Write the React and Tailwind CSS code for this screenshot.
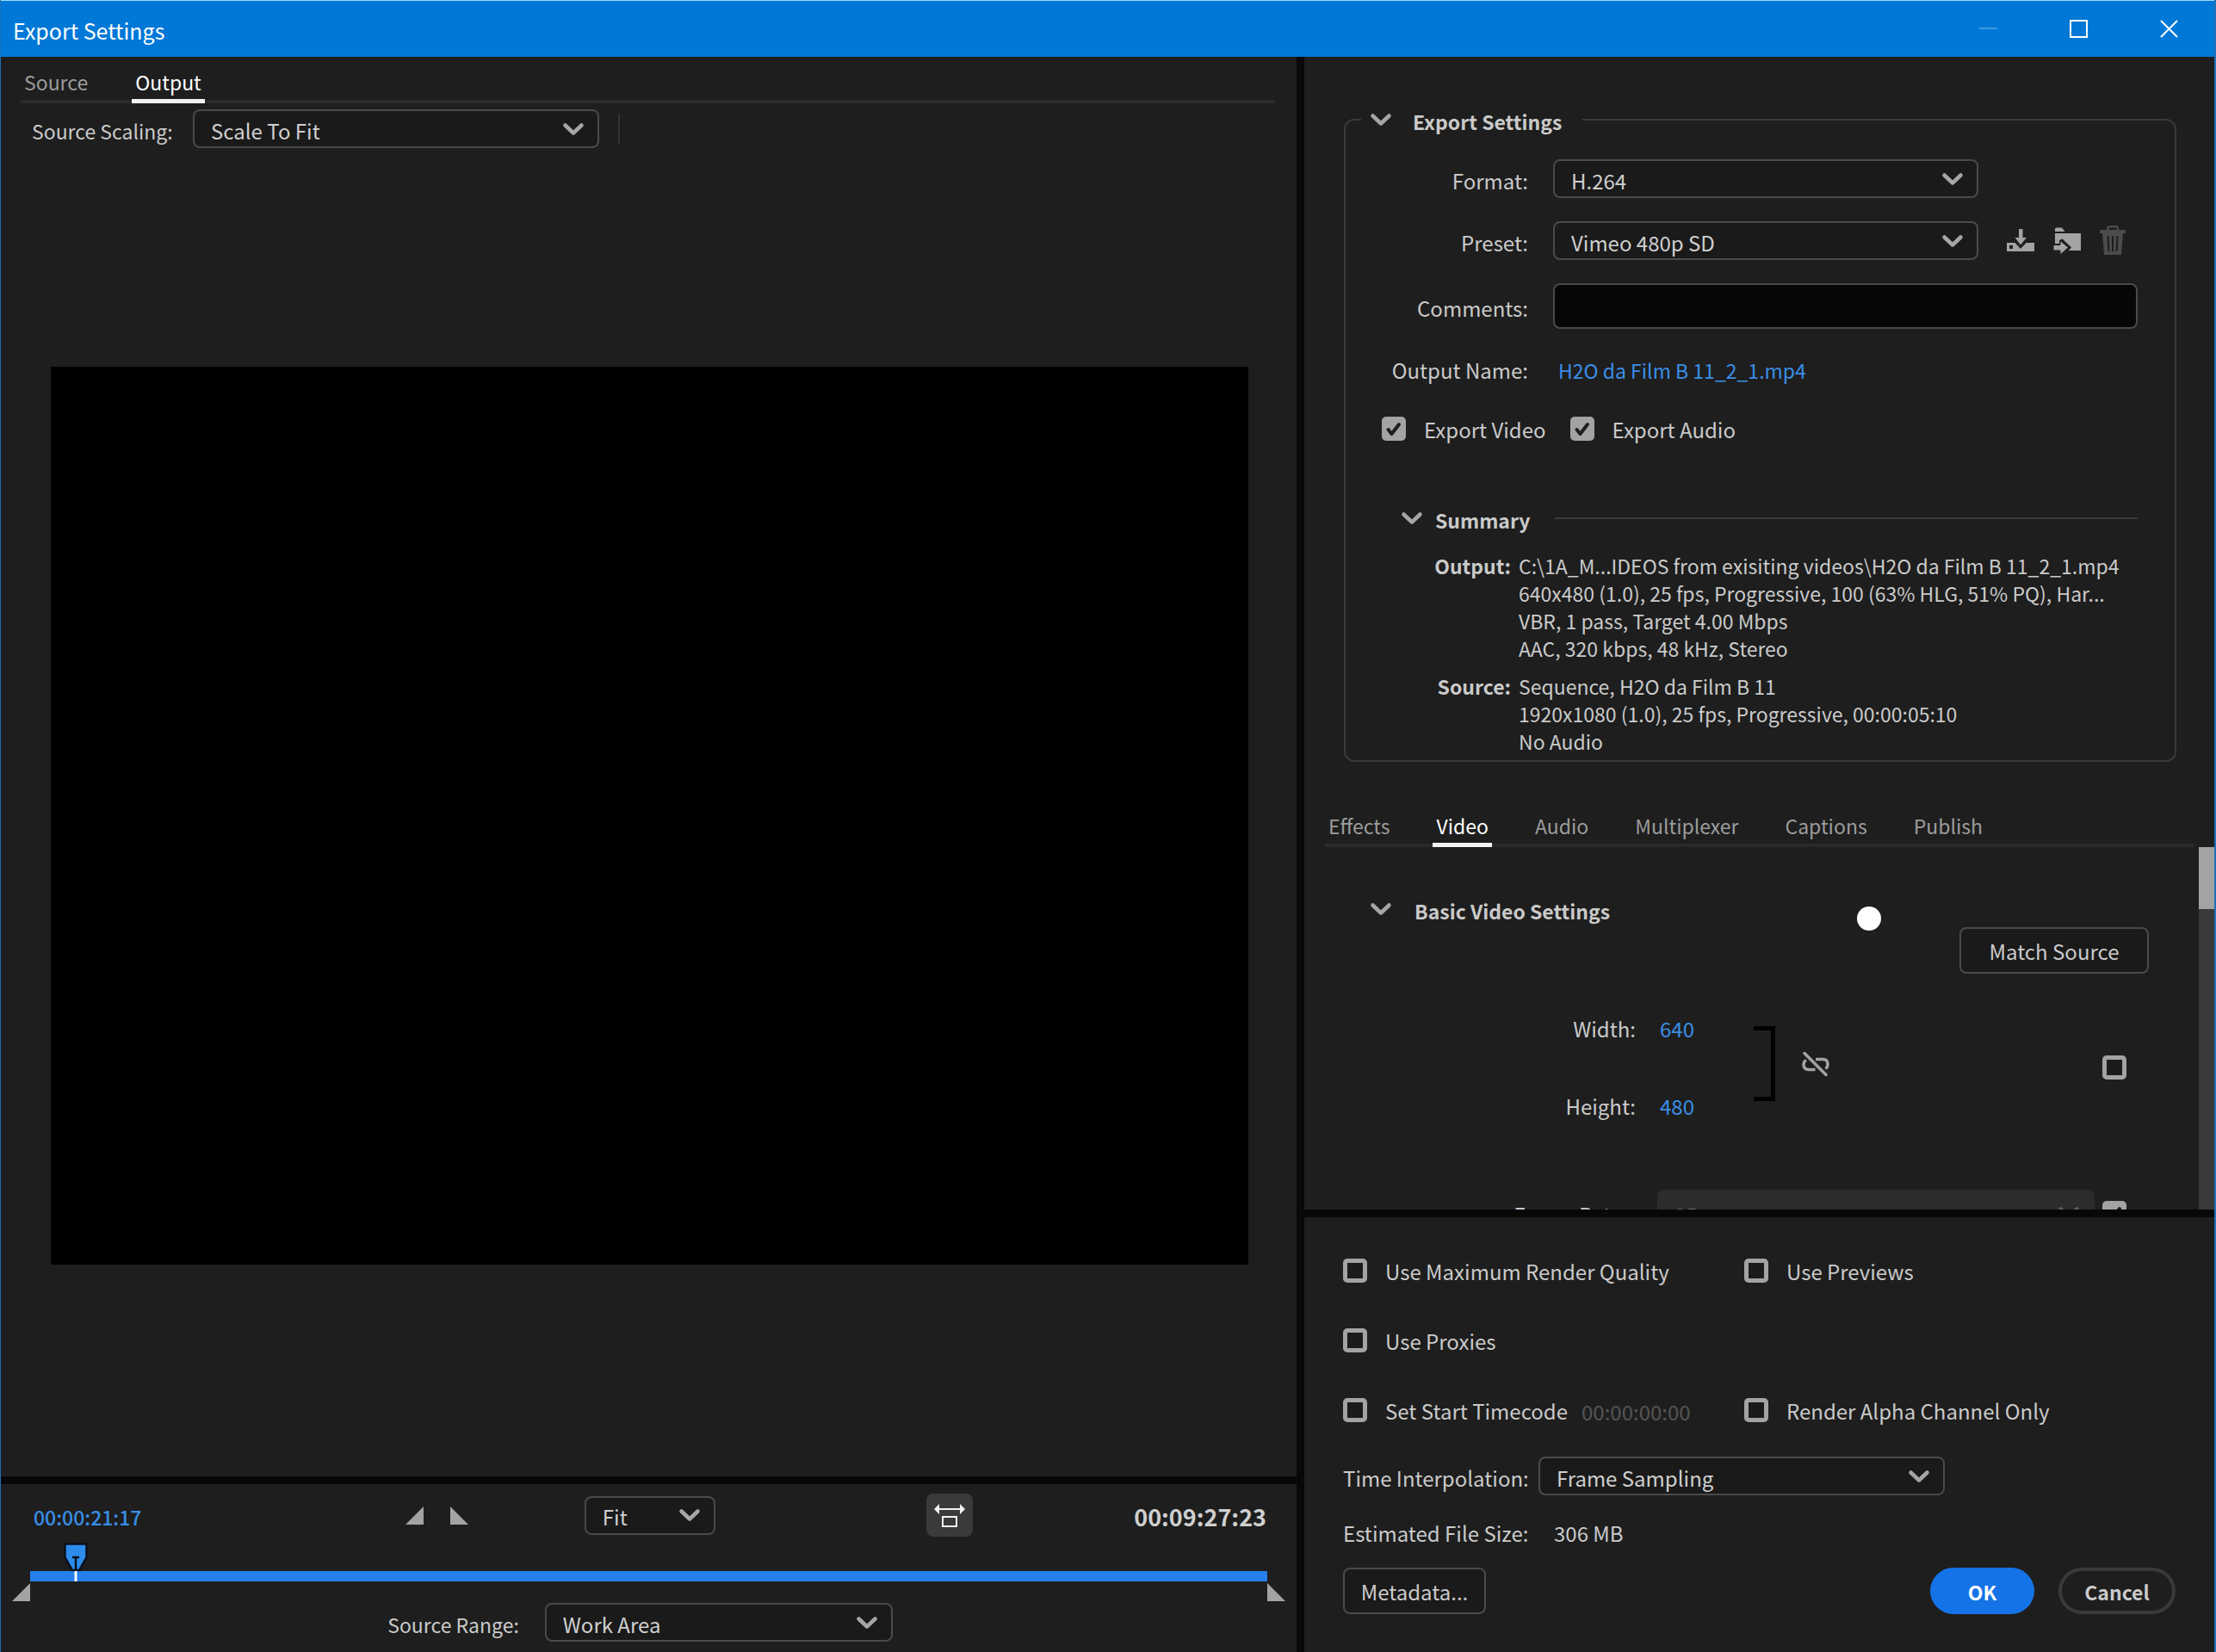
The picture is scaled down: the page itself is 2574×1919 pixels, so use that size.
import React from "react";

function Chevron({ className = "" }) {
  return (
    <svg viewBox="0 0 26 16" className={"h-4 w-[26px] shrink-0 text-[#a6a6a6] " + className} fill="none" stroke="currentColor" strokeWidth="4.500" strokeLinecap="round" strokeLinejoin="round" aria-hidden="true">
      <path d="M3.500 3.500l9.500 9 9.500-9" />
    </svg>
  );
}

function Select({ id, value, className = "" }) {
  return (
    <div className={"grid items-center " + className}>
      <select id={id} aria-label={id} className="col-start-1 row-start-1 h-[45px] w-full appearance-none rounded-lg border-2 border-[#4a4a4a] bg-[#1a1a1a] pl-[19px] pr-12 pt-1 text-[#cfcfcf]">
        <option>{value}</option>
      </select>
      <Chevron className="pointer-events-none col-start-1 row-start-1 mr-[17px] justify-self-end" />
    </div>
  );
}

function Checkbox({ id, label, checked = false }) {
  return (
    <span className="grid size-7 shrink-0 place-items-center">
      <input id={id} type="checkbox" aria-label={label} defaultChecked={checked} className="peer col-start-1 row-start-1 size-7 appearance-none rounded-[5px] border-[5px] border-[#a3a3a3] bg-[#1b1b1b] checked:bg-[#a3a3a3]" />
      <svg viewBox="0 0 28 28" className="pointer-events-none invisible col-start-1 row-start-1 size-7 peer-checked:visible" fill="none" stroke="#1e1e1e" strokeWidth="4" strokeLinecap="round" strokeLinejoin="round" aria-hidden="true">
        <path d="M7.500 15l4 5L20 9" />
      </svg>
    </span>
  );
}

function LabeledCheckbox({ id, label, checked }) {
  return (
    <div className="flex h-7 items-center gap-[21px]">
      <Checkbox id={id} checked={checked} label={label} />
      <label htmlFor={id} className="whitespace-nowrap pt-[2px] leading-7">{label}</label>
    </div>
  );
}

function Tabs({ items, active, className }) {
  return (
    <nav role="tablist" className={"flex h-[54px] border-b-4 border-[#2a2a2a] text-[23px] " + className}>
      {items.map((t) => (
        <button
          key={t}
          role="tab"
          aria-selected={t === active}
          className={
            t === active
              ? "-mb-1 flex items-center border-b-[5px] border-[#f2f2f2] px-1 pt-2 text-white"
              : "-mb-1 flex items-center border-b-[5px] border-transparent px-1 pt-2 text-[#9c9c9c]"
          }
        >
          {t}
        </button>
      ))}
    </nav>
  );
}

function LeftTriangle() {
  return (
    <svg viewBox="0 0 21 21" className="size-[21px]" fill="#a3a3a3" aria-hidden="true">
      <path d="M21 0v21H0z" />
    </svg>
  );
}

function RightTriangle() {
  return (
    <svg viewBox="0 0 21 21" className="size-[21px]" fill="#a3a3a3" aria-hidden="true">
      <path d="M0 0v21h21z" />
    </svg>
  );
}

function TitleBar() {
  return (
    <header className="flex h-[66px] items-center border-t border-[#9adcf8] bg-[#0078d7] text-white">
      <h1 className="flex-1 pl-[14px] pt-[2px] text-[25px]">Export Settings</h1>
      <button aria-label="Minimize" className="grid h-full w-[105px] place-items-center">
        <svg viewBox="0 0 21 21" className="size-[21px]" stroke="#3f9be3" strokeWidth="2"><path d="M0 10h21" /></svg>
      </button>
      <button aria-label="Maximize" className="grid h-full w-[105px] place-items-center">
        <svg viewBox="0 0 21 21" className="size-[21px]" fill="none" stroke="white" strokeWidth="2"><path d="M1 1h19v19H1z" /></svg>
      </button>
      <button aria-label="Close" className="grid h-full w-[105px] place-items-center">
        <svg viewBox="0 0 21 21" className="size-[21px]" fill="none" stroke="white" strokeWidth="2"><path d="M1 1l19 19M20 1L1 20" /></svg>
      </button>
    </header>
  );
}

function Transport() {
  return (
    <section className="h-[195px] pt-[11px]">
      <div className="flex h-[50px] items-center pl-[38px] pr-[35px]">
        <span className="pt-1 text-[23px] font-medium text-[#3a8ee6]">00:00:21:17</span>
        <span className="flex-[308]" />
        <div className="flex items-center gap-[31px]">
          <button aria-label="Set in point"><LeftTriangle /></button>
          <button aria-label="Set out point"><RightTriangle /></button>
        </div>
        <span className="flex-[135]" />
        <Select id="Zoom level" value="Fit" className="w-[152px]" />
        <span className="flex-[246]" />
        <button aria-label="Aspect ratio correction" className="grid h-[50px] w-[54px] place-items-center rounded-lg bg-[#3a3a3a]">
          <svg viewBox="0 0 36 30" className="h-[30px] w-9" fill="none" stroke="#f2f2f2" strokeWidth="2" aria-hidden="true">
            <path d="M5 8h26" />
            <path d="M0 8l6-6v12zM36 8l-6-6v12z" fill="#f2f2f2" stroke="none" />
            <path d="M10 17h16v11H10z" />
          </svg>
        </button>
        <span className="flex-[188]" />
        <span className="pt-1 text-[27px] font-bold text-[#cfcfcf]">00:09:27:23</span>
      </div>
      <div className="relative mx-[34px] mt-10 h-3 bg-[#2680eb]">
        <svg viewBox="0 0 30 46" className="absolute -top-[34px] left-[38px] h-[46px] w-[30px]" aria-hidden="true">
          <path d="M4 2.500h22q1.500 0 1.500 1.500v14L19 33h-8L2.500 18V4q0-1.500 1.500-1.500z" fill="#2d8ceb" stroke="#08111c" strokeWidth="2.500" />
          <path d="M11 18h8M15 18v15" stroke="#08111c" strokeWidth="2.500" />
          <path d="M15 34v12" stroke="#fff" strokeWidth="3" />
        </svg>
        <input type="range" aria-label="Playhead" min="0" max="1000" defaultValue="37" className="absolute inset-0 w-full opacity-0" />
      </div>
      <div className="mt-[2px] flex justify-between px-[13px]">
        <LeftTriangle />
        <RightTriangle />
      </div>
      <div className="mt-[2px] flex items-center justify-center gap-[30px] pr-5">
        <label htmlFor="Source Range" className="pt-1 text-[23px]">Source Range:</label>
        <Select id="Source Range" value="Work Area" className="w-[404px]" />
      </div>
    </section>
  );
}

function FieldRow({ label, htmlFor, className, children }) {
  return (
    <div className={"flex items-center gap-[29px] " + className}>
      <label htmlFor={htmlFor} className="w-[212px] shrink-0 pt-1 text-right leading-8">{label}</label>
      {children}
    </div>
  );
}

function ExportSettings() {
  return (
    <fieldset className="ml-[46px] mr-[44px] mt-[55px] rounded-xl border-2 border-[#3a3a3a] pb-[6px]">
      <legend className="ml-[18px] flex h-9 items-center gap-6 pl-[10px] pr-[24px] text-[23px] font-bold">
        <Chevron />
        <span className="pt-1">Export Settings</span>
      </legend>
      <FieldRow label="Format:" htmlFor="Format" className="mt-7">
        <Select id="Format" value="H.264" className="w-[494px]" />
      </FieldRow>
      <FieldRow label="Preset:" htmlFor="Preset" className="mt-[27px]">
        <Select id="Preset" value="Vimeo 480p SD" className="w-[494px]" />
        <div className="ml-1 flex items-center gap-[22px]">
          <button aria-label="Save preset">
            <svg viewBox="0 0 32 32" className="size-8" fill="#a3a3a3" aria-hidden="true">
              <path d="M14 2h4.500v10h4.500L16 20.500 9.500 12H14z" />
              <path fillRule="evenodd" d="M0 18h9.500L16 25l6.500-7H32v10H0zM3 21v4h4v-4z" />
            </svg>
          </button>
          <button aria-label="Import preset">
            <svg viewBox="0 0 32 32" className="size-8" fill="#a3a3a3" aria-hidden="true">
              <path d="M2 5V2q0-1.500 1.500-1.500H10L13.500 5z" />
              <path d="M2 7h30v20H17.500l3.500-3.500L10.500 13.500 7 15v4H2z" />
              <path d="M0 20.500h8V15.500l9.500 8L8 32v-5H0z" stroke="#1e1e1e" strokeWidth="1" />
            </svg>
          </button>
          <button aria-label="Delete preset">
            <svg viewBox="0 0 30 35" className="h-[35px] w-[30px]" fill="#4b4b4b" aria-hidden="true">
              <path d="M0 5h8V3q0-3 3-3h8q3 0 3 3v2h8v4H0zM10.500 5h9V2.500h-9z" fillRule="evenodd" />
              <path d="M3 9h24l-2 25H5zM8.500 12l1 18h2l-1-18zM14 12v18h2V12zM19.500 12l-1 18h2l1-18z" fillRule="evenodd" />
            </svg>
          </button>
        </div>
      </FieldRow>
      <FieldRow label="Comments:" htmlFor="comments" className="mr-[43px] mt-[27px]">
        <input id="comments" type="text" className="h-[53px] min-w-0 flex-1 rounded-lg border-2 border-[#4a4a4a] bg-[#070707] px-4" />
      </FieldRow>
      <FieldRow label="Output Name:" className="mt-7">
        <a href="#output" className="ml-[6px] pt-1 text-[23px] leading-8 text-[#3a8ee6]">H2O da Film B 11_2_1.mp4</a>
      </FieldRow>
      <div className="mt-[38px] flex gap-[28px] pl-[42px]">
        <LabeledCheckbox id="export-video" label="Export Video" checked />
        <LabeledCheckbox id="export-audio" label="Export Audio" checked />
      </div>
      <div className="mr-[43px] mt-[72px] flex items-center gap-[14px] pl-16">
        <Chevron />
        <h3 className="pt-1 text-[23px] font-bold leading-8">Summary</h3>
        <div className="ml-[14px] h-[2px] flex-1 bg-[#3a3a3a]" />
      </div>
      <dl className="mt-[21px] grid grid-cols-[192px_1fr] gap-x-[9px] gap-y-3 text-[23px] leading-8">
        <dt className="text-right font-bold">Output:</dt>
        <dd>
          <p>C:\1A_M...IDEOS from exisiting videos\H2O da Film B 11_2_1.mp4</p>
          <p>640x480 (1.0), 25 fps, Progressive, 100 (63% HLG, 51% PQ), Har...</p>
          <p>VBR, 1 pass, Target 4.00 Mbps</p>
          <p>AAC, 320 kbps, 48 kHz, Stereo</p>
        </dd>
        <dt className="text-right font-bold">Source:</dt>
        <dd>
          <p>Sequence, H2O da Film B 11</p>
          <p>1920x1080 (1.0), 25 fps, Progressive, 00:00:05:10</p>
          <p>No Audio</p>
        </dd>
      </dl>
    </fieldset>
  );
}

function VideoSettings() {
  return (
    <div className="flex h-[421px] overflow-hidden">
      <div className="relative min-w-0 flex-1 pt-[54px]">
        <div className="flex items-center gap-[26px] pl-[76px]">
          <Chevron />
          <h3 className="pt-1 text-[23px] font-bold leading-8">Basic Video Settings</h3>
        </div>
        <span className="absolute right-[369px] top-[69px] size-7 rounded-full bg-white" />
        <div className="mt-[3px] flex justify-end pr-[58px]">
          <button className="h-[54px] w-[220px] rounded-lg border-2 border-[#4a4a4a] bg-[#1a1a1a] pt-[2px]">Match Source</button>
        </div>
        <div className="mt-[46px] flex items-center pr-[84px]">
          <div className="grid w-[522px] grid-cols-[385px_1fr] gap-x-7 gap-y-[54px] leading-9">
            <span className="text-right">Width:</span>
            <a href="#width" className="text-[#3a8ee6]">640</a>
            <span className="text-right">Height:</span>
            <a href="#height" className="text-[#3a8ee6]">480</a>
          </div>
          <div className="mt-[15px] flex items-center gap-[30px] self-start">
            <div className="h-[87px] w-[25px] border-y-[5px] border-r-[5px] border-black" />
            <button aria-label="Constrain width and height">
              <svg viewBox="0 0 34 30" className="h-[30px] w-[34px]" fill="none" stroke="#a3a3a3" strokeWidth="3.500" strokeLinecap="round" aria-hidden="true">
                <path d="M4 2.500l25 25" />
                <path d="M6 10.500q-3 1.500-3 5 0 6 6 6h7.500" strokeLinecap="butt" />
                <path d="M17 9.500h8.500q5.500 0 5.500 6 0 3-2.500 5" strokeLinecap="butt" />
              </svg>
            </button>
          </div>
          <span className="ml-auto"><Checkbox id="match-size" label="Match source size" /></span>
        </div>
        <div className="mt-[79px] flex items-center pr-[84px]">
          <label htmlFor="frame-rate" className="w-[376px] pt-1 text-right">Frame Rate:</label>
          <div className="ml-[34px] mr-[9px] grid flex-1 items-center">
            <select id="frame-rate" disabled className="col-start-1 row-start-1 h-[54px] w-full appearance-none rounded-lg bg-[#2c2c2c] pl-5 pt-1 text-[#6a6a6a]">
              <option>25</option>
            </select>
            <Chevron className="col-start-1 row-start-1 mr-[17px] justify-self-end opacity-40" />
          </div>
          <Checkbox id="match-rate" label="Match source frame rate" checked />
        </div>
      </div>
      <div className="w-[18px] bg-[#3a3a3a]">
        <div className="h-[72px] bg-[#a3a3a3]" />
      </div>
    </div>
  );
}

function OutputOptions() {
  return (
    <section className="flex-1 px-[45px] pt-12">
      <div className="grid grid-cols-[466px_1fr] gap-y-[53px]">
        <LabeledCheckbox id="max-quality" label="Use Maximum Render Quality" />
        <LabeledCheckbox id="previews" label="Use Previews" />
        <div className="col-span-2"><LabeledCheckbox id="proxies" label="Use Proxies" /></div>
        <div className="flex h-7 gap-4">
          <LabeledCheckbox id="start-timecode" label="Set Start Timecode" />
          <span className="leading-8 text-[#555]">00:00:00:00</span>
        </div>
        <LabeledCheckbox id="alpha-only" label="Render Alpha Channel Only" />
      </div>
      <div className="mt-10 flex items-center">
        <label htmlFor="Time Interpolation" className="w-[227px] whitespace-nowrap pt-1">Time Interpolation:</label>
        <Select id="Time Interpolation" value="Frame Sampling" className="w-[472px]" />
      </div>
      <div className="mt-[26px] flex leading-9">
        <span className="w-[245px]">Estimated File Size:</span>
        <span>306 MB</span>
      </div>
      <div className="mt-[22px] flex gap-7">
        <button className="mr-auto h-[54px] w-[166px] rounded-lg border-2 border-[#4a4a4a] bg-[#1a1a1a] pt-[2px]">Metadata...</button>
        <button className="h-[54px] w-[121px] rounded-full bg-[#1473e6] pt-[2px] text-[23px] font-bold text-white">OK</button>
        <button className="h-[54px] w-[136px] rounded-full border-4 border-[#3a3a3a] pt-[2px] text-[23px] font-bold">Cancel</button>
      </div>
    </section>
  );
}

export default function App() {
  return (
    <div className="flex min-h-screen flex-col border-l border-r-2 border-[#1f6fb8] bg-[#1e1e1e] font-['Noto_Sans_CJK_SC','Noto_Sans',sans-serif] text-[24px] leading-9 text-[#cacaca]">
      <TitleBar />
      <main className="flex flex-1">
        <section className="flex min-w-0 flex-[1505] flex-col">
          <Tabs items={["Source", "Output"]} active="Output" className="ml-[23px] mr-[25px] gap-[47px]" />
          <div className="mt-[7px] flex items-center pl-9">
            <label htmlFor="Source Scaling" className="w-[187px] pt-1 text-[23px]">Source Scaling:</label>
            <Select id="Source Scaling" value="Scale To Fit" className="w-[472px]" />
            <div className="ml-[22px] h-9 w-[2px] bg-[#333]" />
          </div>
          <div className="flex flex-1 items-center pl-[58px] pr-14 pt-2">
            <div className="aspect-[4/3] w-full bg-black" />
          </div>
          <div className="h-[9px] bg-[#080808]" />
          <Transport />
        </section>
        <div className="w-[9px] bg-[#080808]" />
        <section className="flex min-w-0 flex-[1057] flex-col">
          <ExportSettings />
          <Tabs items={["Effects", "Video", "Audio", "Multiplexer", "Captions", "Publish"]} active="Video" className="ml-6 mr-6 mt-[45px] gap-[46px]" />
          <VideoSettings />
          <div className="h-[9px] bg-[#080808]" />
          <OutputOptions />
        </section>
      </main>
    </div>
  );
}
